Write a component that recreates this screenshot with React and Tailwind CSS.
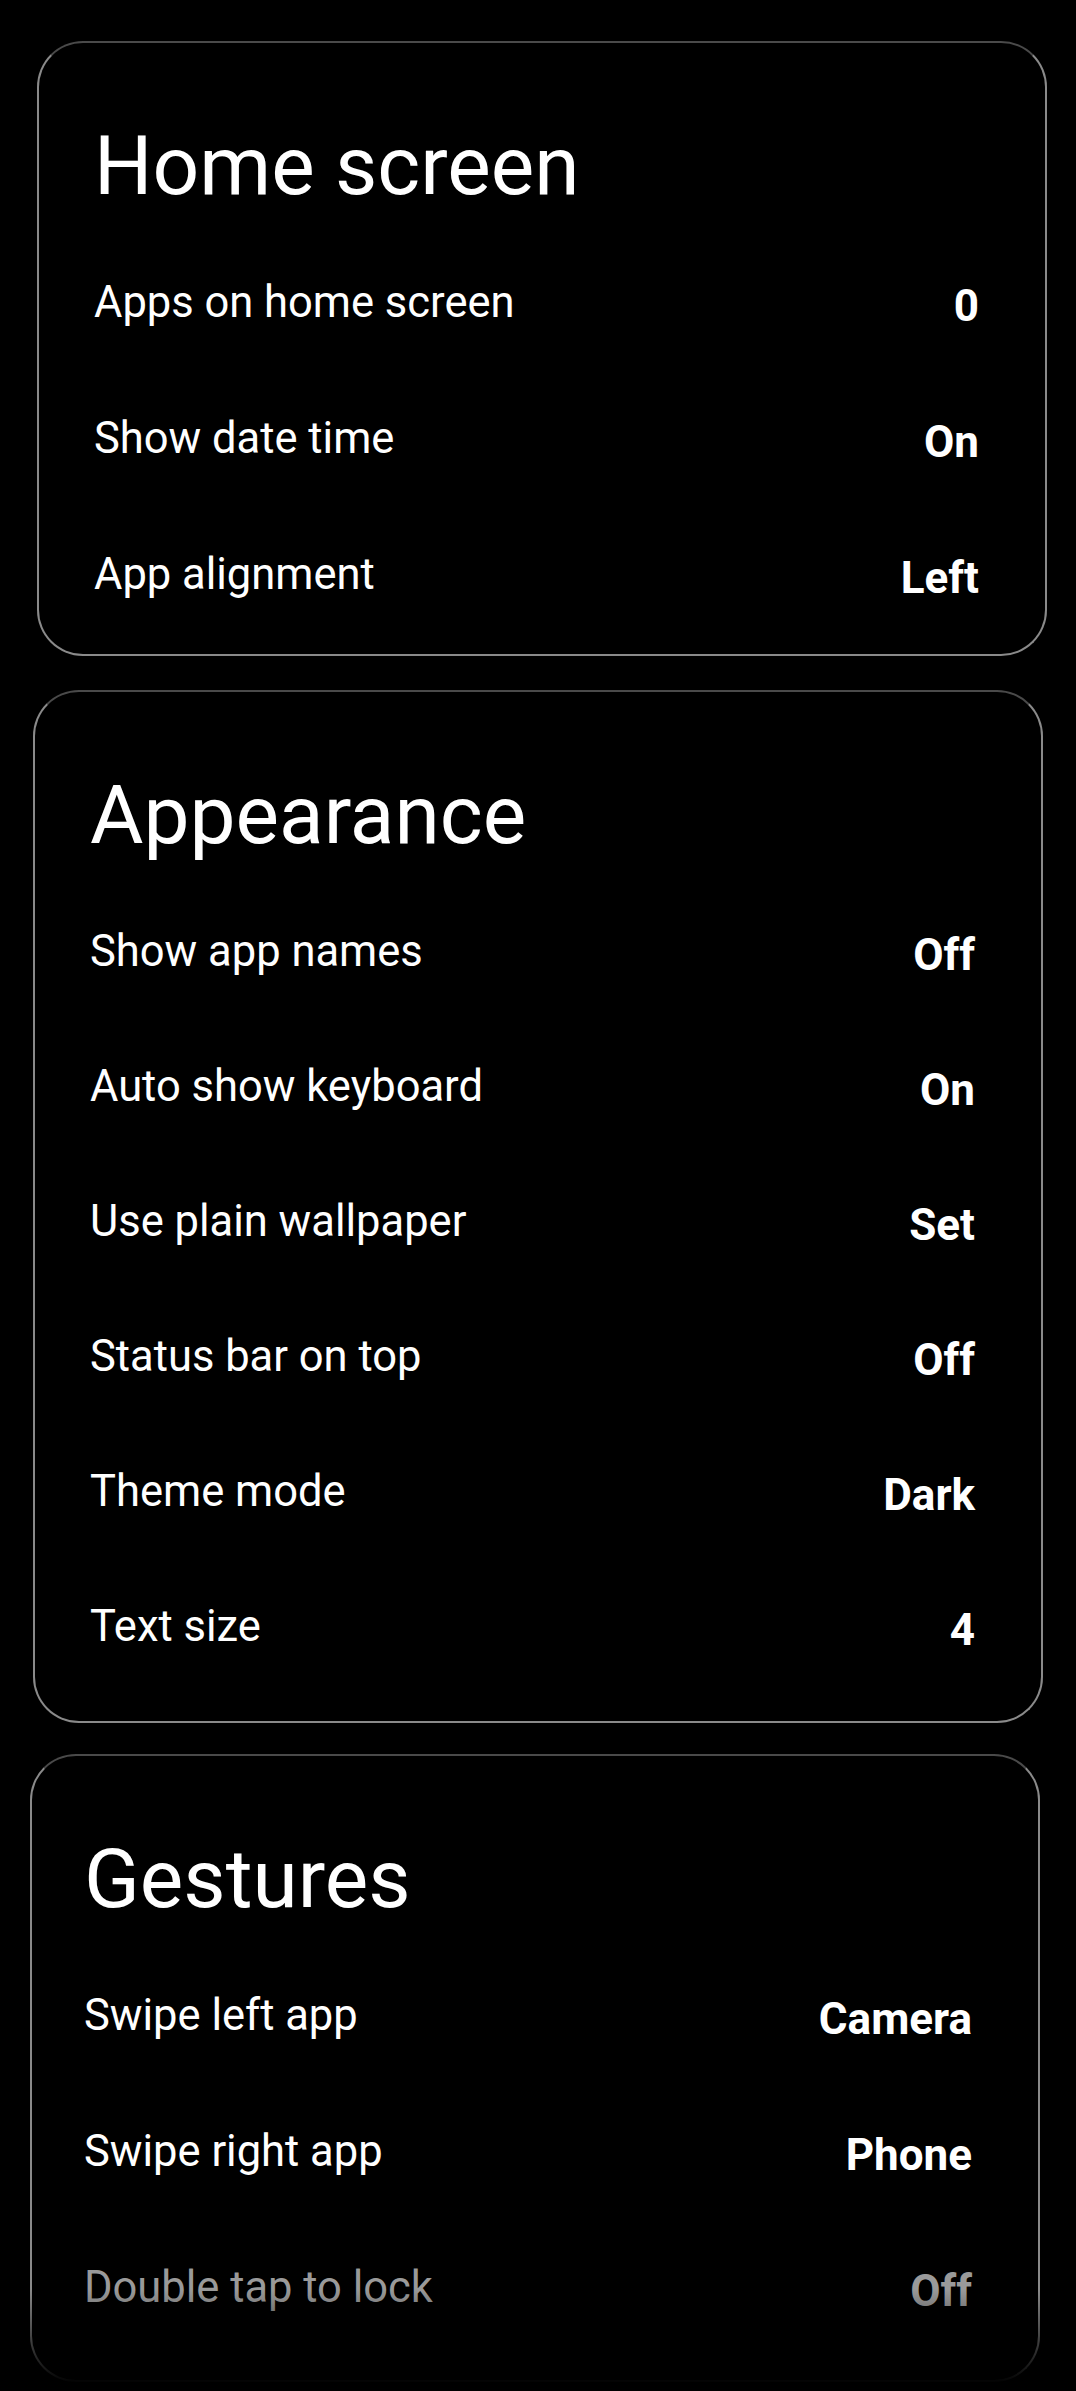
import React from "react";

const font = { fontFamily: "Roboto, 'Noto Sans', Arial, sans-serif" };

function Row({ label, value, dim, h }) {
  return (
    <div className={`flex items-center justify-between ${h}`}>
      <span className={`text-[43.5px] leading-none ${dim ? "text-[#9a9a9a]" : "text-white"}`}>{label}</span>
      <span className={`text-[44px] leading-none font-bold translate-y-[3px] ${dim ? "text-[#9a9a9a]" : "text-white"}`}>{value}</span>
    </div>
  );
}

function Card({ title, rows, className, rowH, pb, pl, last }) {
  return (
    <div
      className={`relative rounded-[46px] border-2 border-[#8a8a8a] border-t-[#4a4a4a] pr-[66px] pt-[82px] ${pl} ${pb} ${className}`}
    >
      <div className="text-[82px] leading-none text-white mb-[28px]">{title}</div>
      {rows.map((r, i) => (
        <Row key={i} label={r[0]} value={r[1]} dim={r[2]} h={rowH} />
      ))}
      {last && (
        <div className="pointer-events-none absolute left-[-4px] right-[-4px] bottom-[-4px] h-[95px] bg-gradient-to-b from-transparent to-black" />
      )}
    </div>
  );
}

export default function App() {
  return (
    <div className="w-[1076px] h-[2391px] bg-black overflow-hidden" style={font}>
      <div className="pt-[41px] flex flex-col">
        <Card
          title="Home screen"
          className="ml-[37px] w-[1010px]"
          pl="pl-[55px]"
          rowH="h-[136px]"
          pb="pb-[11px]"
          rows={[
            ["Apps on home screen", "0"],
            ["Show date time", "On"],
            ["App alignment", "Left"],
          ]}
        />
        <div className="h-[34px]" />
        <Card
          title="Appearance"
          className="ml-[33px] w-[1010px]"
          pl="pl-[55px]"
          rowH="h-[135px]"
          pb="pb-[27px]"
          rows={[
            ["Show app names", "Off"],
            ["Auto show keyboard", "On"],
            ["Use plain wallpaper", "Set"],
            ["Status bar on top", "Off"],
            ["Theme mode", "Dark"],
            ["Text size", "4"],
          ]}
        />
        <div className="h-[31px]" />
        <Card
          title="Gestures"
          className="ml-[30px] w-[1010px]"
          pl="pl-[52px]"
          rowH="h-[136px]"
          pb="pb-[24px]"
          last
          rows={[
            ["Swipe left app", "Camera"],
            ["Swipe right app", "Phone"],
            ["Double tap to lock", "Off", true],
          ]}
        />
      </div>
    </div>
  );
}
